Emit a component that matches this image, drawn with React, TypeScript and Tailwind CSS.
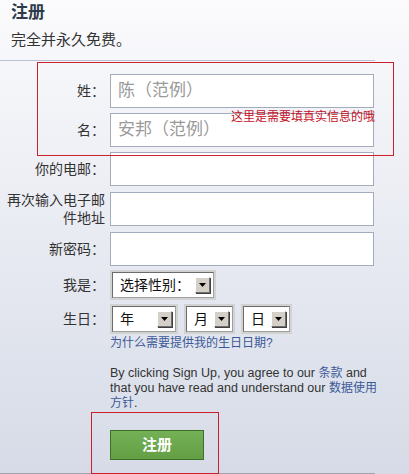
import React from "react";

const FONT = '"Liberation Sans", "Noto Sans CJK SC", sans-serif';

function Arrow() {
  return (
    <div className="flex h-[16px] w-[15px] items-center justify-center border border-t-white border-l-white border-r-[#6f6f6f] border-b-[#6f6f6f] bg-[#d4d0c8] shadow-[1px_1px_0_#404040]">
      <svg width="7" height="4" viewBox="0 0 7 4">
        <path d="M0 0h7L3.5 4z" fill="#000" />
      </svg>
    </div>
  );
}

function Select({ w, label }: { w: string; label: string }) {
  return (
    <div className={`${w} h-[30px] border-2 border-[#d2d2d2]`}>
      <div className="flex h-full items-center justify-between border border-t-[#6b6b6b] border-l-[#6b6b6b] border-r-[#a0a0a0] border-b-[#a0a0a0] bg-white pl-[7px] pr-[3px]">
        <span className="text-[14px] leading-none text-[#111]">{label}</span>
        <Arrow />
      </div>
    </div>
  );
}

function Row({ label, children, h = "h-[34px]" }: { label: React.ReactNode; children: React.ReactNode; h?: string }) {
  return (
    <div className={`flex items-center ${h}`}>
      <div className="w-[105px] text-right text-[14px] leading-[18px] text-[#333]">{label}</div>
      <div className="ml-[5px]">{children}</div>
    </div>
  );
}

function Input({ placeholder }: { placeholder?: string }) {
  return (
    <div className="flex h-[34px] w-[264px] items-center border border-[#a3acbc] bg-white pl-[7px] text-[17px] text-[#9a9a9a]">
      {placeholder}
    </div>
  );
}

export default function App() {
  return (
    <div
      className="relative h-[474px] w-[409px] overflow-hidden bg-gradient-to-b from-[#fbfbfd] to-[#d6dbe7]"
      style={{ fontFamily: FONT }}
    >
      <div className="flex h-full w-[375px] flex-col border-b border-[#9ea3ad]">
        <div className="pl-[11px] pt-[2px]">
          <div className="text-[17px] font-bold leading-[22px] text-[#2f3a4a]">注册</div>
          <div className="mt-[6px] text-[15px] leading-[20px] text-[#333]">完全并永久免费。</div>
        </div>
        <div className="mt-[10px] h-px w-full bg-[#b7c1d2]" />
        <div className="flex flex-col gap-[5px] pt-[13px]">
          <Row label="姓：">
            <Input placeholder="陈（范例）" />
          </Row>
          <Row label="名：">
            <Input placeholder="安邦（范例）" />
          </Row>
          <Row label="你的电邮：">
            <Input />
          </Row>
          <Row label={<>再次输入电子邮<br />件地址</>} h="h-[36px]">
            <Input />
          </Row>
          <Row label="新密码：">
            <Input />
          </Row>
        </div>
        <div className="mt-[4px] flex h-[30px] items-center">
          <div className="w-[105px] text-right text-[14px] text-[#333]">我是：</div>
          <div className="ml-[5px]">
            <Select w="w-[106px]" label="选择性别：" />
          </div>
        </div>
        <div className="mt-[4px] flex h-[30px] items-center">
          <div className="w-[105px] text-right text-[14px] text-[#333]">生日：</div>
          <div className="ml-[5px] flex gap-[6px]">
            <Select w="w-[68px]" label="年" />
            <Select w="w-[51px]" label="月" />
            <Select w="w-[51px]" label="日" />
          </div>
        </div>
        <div className="ml-[110px] mt-[2px] text-[12px] leading-[14px] text-[#3b5998]">
          为什么需要提供我的生日日期?
        </div>
        <div className="ml-[110px] mt-[16px] w-[272px] text-[12.5px] leading-[15px] text-[#333]">
          By clicking Sign Up, you agree to our <span className="text-[12px] text-[#3b5998]">条款</span> and that you have read
          and understand our <span className="text-[12px] text-[#3b5998]">数据使用方针</span>.
        </div>
        <div className="ml-[110px] mt-[19px]">
          <div className="flex h-[30px] w-[94px] items-center justify-center border border-[#3d7026] bg-gradient-to-b from-[#74b055] to-[#649f46] text-[15px] font-bold text-white">
            注册
          </div>
        </div>
      </div>

      {/* annotation overlays */}
      <div className="pointer-events-none absolute left-[37px] top-[62px] h-[94px] w-[357px] border border-[#cc1f2c]" />
      <div className="absolute left-[231px] top-[110px] text-[12px] leading-[14px] text-[#c4101f]">
        这里是需要填真实信息的哦
      </div>
      <div className="pointer-events-none absolute left-[91px] top-[412px] h-[62px] w-[128px] border border-[#cc1f2c]" />
    </div>
  );
}
